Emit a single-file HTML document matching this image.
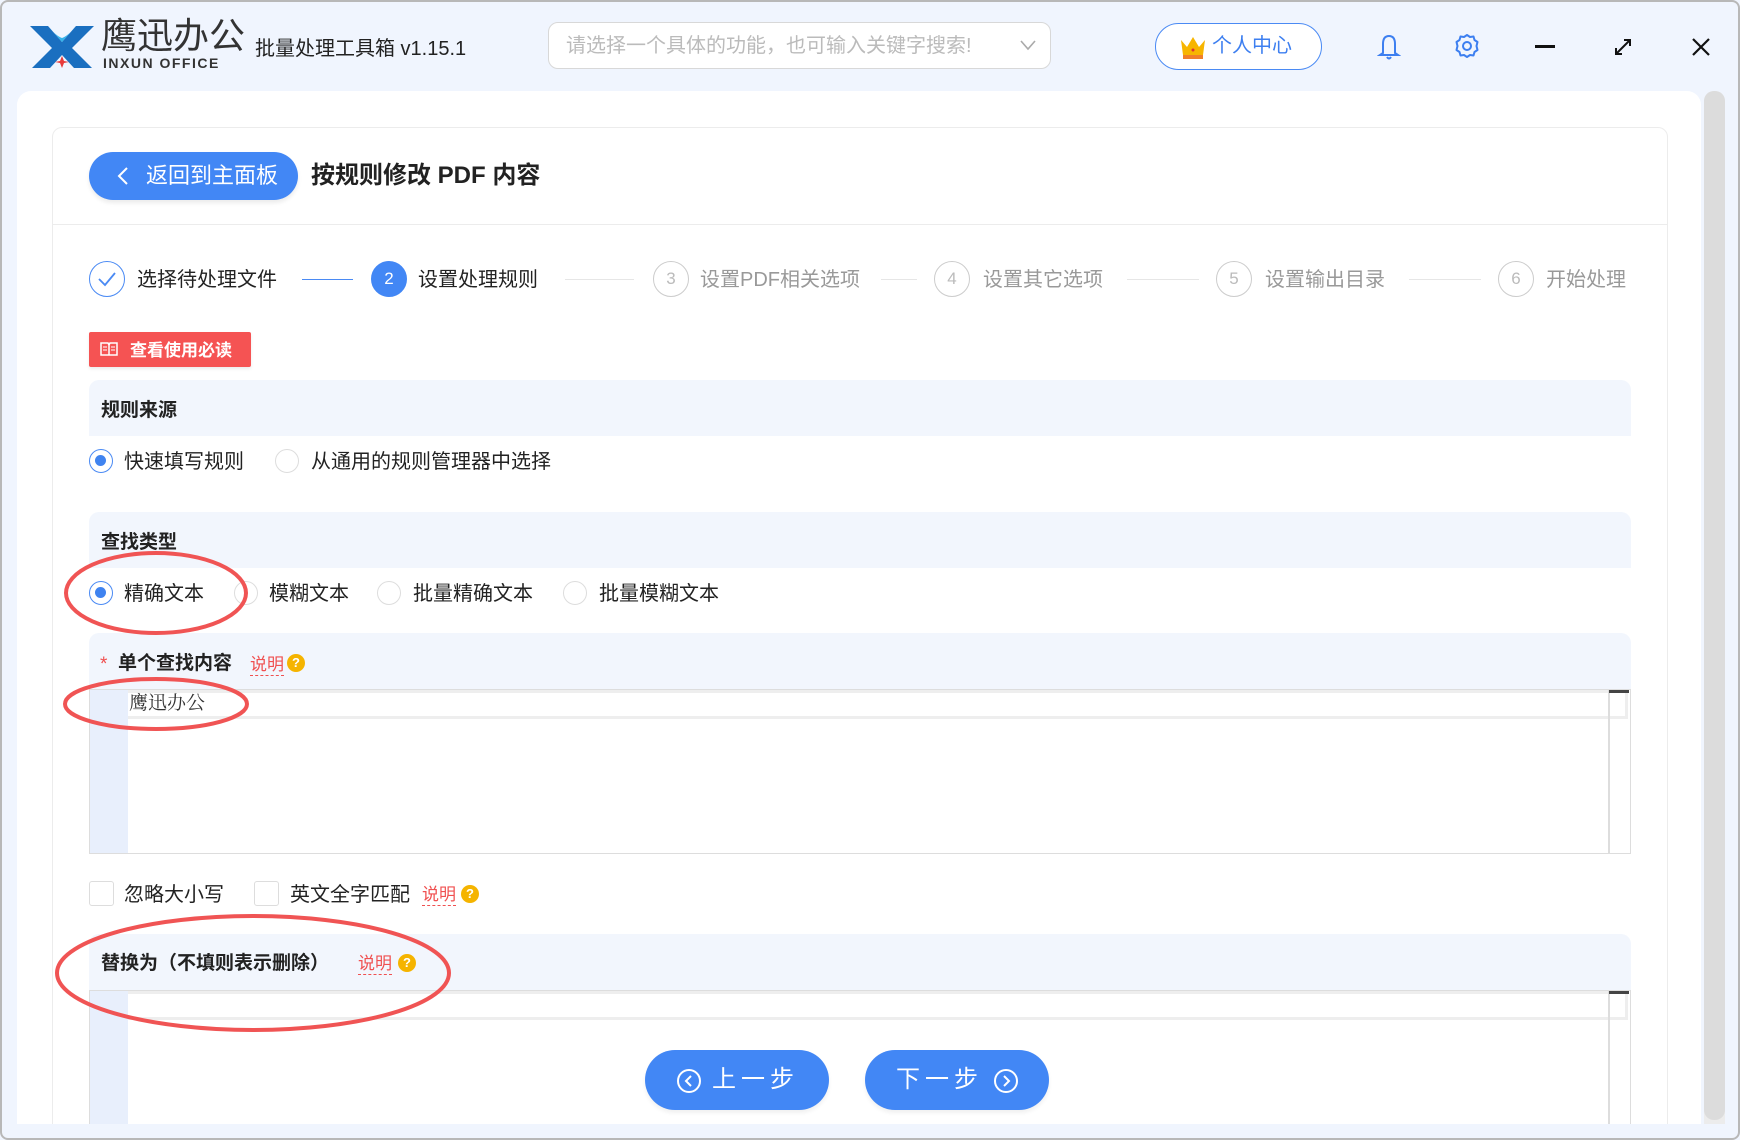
<!DOCTYPE html>
<html><head><meta charset="utf-8"><style>
*{margin:0;padding:0;box-sizing:border-box}
body{width:1740px;height:1140px;background:#f0f5fe;position:relative;overflow:hidden;font-family:"Liberation Sans","Noto Sans CJK SC",sans-serif;color:#222}
.a{position:absolute}
.t{position:absolute;white-space:nowrap;line-height:1}
.circ{position:absolute;width:36px;height:36px;border-radius:50%;border:1.5px solid #ccc;color:#bbb;font-size:17px;text-align:center;line-height:33px}
.stx{position:absolute;font-size:20px;color:#999;white-space:nowrap;line-height:1;top:270px}
.ln{position:absolute;height:1px;background:#e6e6e6;top:279px}
.sec{position:absolute;left:89px;width:1542px;background:#f2f6fd;border-radius:10px 10px 0 0}
.sh{position:absolute;font-size:19px;font-weight:bold;white-space:nowrap;line-height:1}
.radio{position:absolute;width:24px;height:24px;border-radius:50%;border:1.5px solid #ddd;background:#fff}
.radio.on{border-color:#4a8af4}
.radio.on::after{content:"";position:absolute;left:5px;top:5px;width:11px;height:11px;border-radius:50%;background:#3f83f0}
.rt{position:absolute;font-size:20px;white-space:nowrap;line-height:1}
.sm{position:absolute;font-size:17px;color:#f05050;white-space:nowrap;line-height:1;border-bottom:1.5px dashed #f05050;padding-bottom:2px}
.q{position:absolute;width:18px;height:18px;border-radius:50%;background:#f5b400;color:#fff;font-size:13px;text-align:center;line-height:18px;font-weight:bold}
.cb{position:absolute;width:25px;height:25px;border:1.5px solid #ddd;border-radius:3px;background:#fff}
#clip{position:absolute;left:0;top:0;width:1740px;height:1124px;overflow:hidden}
</style></head><body>
<div class="a" style="left:0;top:0;width:1740px;height:1140px;border:2px solid #b8b8b8;border-radius:8px;pointer-events:none;z-index:10"></div>

<svg class="a" style="left:28px;top:22px" width="68" height="48" viewBox="0 0 68 48">
<path d="M2 4 L20 4 L34 20 L48 4 L66 4 L44 26 L64 46 L46 46 L34 33 L22 46 L4 46 L24 26 Z" fill="#1a6fc0"/>
<path d="M20 4 L34 20 L48 4 Q40 14 34 16 Q28 14 20 4Z" fill="#35b3ea"/>
<path d="M34 34 L36 39 L41 40 L36 41 L34 46 L32 41 L27 40 L32 39Z" fill="#e83a3a"/>
</svg>
<div class="t" style="left:101px;top:18px;font-size:36px;color:#333;letter-spacing:0px">鹰迅办公</div>
<div class="t" style="left:103px;top:56px;font-size:14px;font-weight:bold;color:#333;letter-spacing:1.5px">INXUN OFFICE</div>
<div class="t" style="left:255px;top:39px;font-size:20px;color:#222">批量处理工具箱 v1.15.1</div>

<div class="a" style="left:548px;top:22px;width:503px;height:47px;border:1px solid #d8d8d8;border-radius:10px;background:#fff"></div>
<div class="t" style="left:566px;top:36px;font-size:20px;color:#bbb">请选择一个具体的功能，也可输入关键字搜索!</div>
<svg class="a" style="left:1019px;top:38px" width="18" height="14"><path d="M2 3 L9 11 L16 3" fill="none" stroke="#aaa" stroke-width="1.6"/></svg>

<div class="a" style="left:1155px;top:23px;width:167px;height:47px;border:1.5px solid #4a8af4;border-radius:24px;background:#fff"></div>
<svg class="a" style="left:1179px;top:34px" width="28" height="27" viewBox="0 0 28 27"><path d="M2 6 L8 13 L14 3 L20 13 L26 6 L24 21 L4 21Z" fill="#f7b500"/><rect x="4" y="21" width="20" height="4" fill="#f07f2a"/><circle cx="14" cy="16" r="1.5" fill="#d33"/></svg>
<div class="t" style="left:1212px;top:36px;font-size:20px;color:#3d7ff0">个人中心</div>

<svg class="a" style="left:1377px;top:33px" width="24" height="28" viewBox="0 0 24 28"><path d="M12 3 C7 3 6 7 6 11 L6 20 L3 22 L21 22 L18 20 L18 11 C18 7 17 3 12 3Z" fill="none" stroke="#3d7ff0" stroke-width="2"/><path d="M10 24 Q12 27 14 24" fill="none" stroke="#3d7ff0" stroke-width="2"/></svg>
<svg class="a" style="left:1454px;top:33px" width="26" height="26" viewBox="0 0 26 26"><path d="M13 2 L16 4 L19.5 3.5 L20.5 7 L23.5 9 L22.5 13 L23.5 17 L20.5 19 L19.5 22.5 L16 22 L13 24 L10 22 L6.5 22.5 L5.5 19 L2.5 17 L3.5 13 L2.5 9 L5.5 7 L6.5 3.5 L10 4Z" fill="none" stroke="#3d7ff0" stroke-width="2" stroke-linejoin="round"/><circle cx="13" cy="13" r="4" fill="none" stroke="#3d7ff0" stroke-width="2"/></svg>
<div class="a" style="left:1535px;top:45px;width:20px;height:2.5px;background:#111"></div>
<svg class="a" style="left:1612px;top:36px" width="22" height="22"><path d="M5 17 L17 5 M12 4 L18 4 L18 10 M4 12 L4 18 L10 18" fill="none" stroke="#111" stroke-width="2"/></svg>
<svg class="a" style="left:1690px;top:36px" width="22" height="22"><path d="M3 3 L19 19 M19 3 L3 19" stroke="#111" stroke-width="2.2"/></svg>

<div id="clip">
<div class="a" style="left:17px;top:91px;width:1684px;height:1040px;background:#fff;border-radius:14px 14px 0 0"></div>
<div class="a" style="left:1704px;top:91px;width:21px;height:1040px;background:#ececec;border-radius:10px 10px 0 0"></div>
<div class="a" style="left:1704px;top:91px;width:21px;height:1029px;background:#dcdcdc;border-radius:10px"></div>

<div class="a" style="left:52px;top:127px;width:1616px;height:1010px;border:1px solid #ececec;border-radius:10px"></div>
<div class="a" style="left:53px;top:224px;width:1614px;height:1px;background:#ececec"></div>

<div class="a" style="left:89px;top:152px;width:209px;height:48px;background:#4287f5;border-radius:24px;box-shadow:0 3px 4px rgba(0,0,0,.08)"></div>
<svg class="a" style="left:116px;top:166px" width="14" height="20"><path d="M11 2 L3 10 L11 18" fill="none" stroke="#fff" stroke-width="2"/></svg>
<div class="t" style="left:146px;top:165px;font-size:22px;color:#fff">返回到主面板</div>
<div class="t" style="left:311px;top:164px;font-size:24px;font-weight:bold;color:#222">按规则修改 PDF 内容</div>

<div class="circ" style="left:89px;top:261px;border-color:#4a8af4"></div>
<svg class="a" style="left:97px;top:270px" width="20" height="18"><path d="M2 9 L8 15 L18 3" fill="none" stroke="#4a8af4" stroke-width="1.8"/></svg>
<div class="stx" style="left:137px;color:#222">选择待处理文件</div>
<div class="ln" style="left:302px;width:51px;background:#4a8af4"></div>
<div class="circ" style="left:371px;top:261px;background:#4287f5;border-color:#4287f5;color:#fff">2</div>
<div class="stx" style="left:418px;color:#222">设置处理规则</div>
<div class="ln" style="left:565px;width:69px"></div>
<div class="circ" style="left:653px;top:261px">3</div>
<div class="stx" style="left:700px">设置PDF相关选项</div>
<div class="ln" style="left:881px;width:36px"></div>
<div class="circ" style="left:934px;top:261px">4</div>
<div class="stx" style="left:983px">设置其它选项</div>
<div class="ln" style="left:1127px;width:72px"></div>
<div class="circ" style="left:1216px;top:261px">5</div>
<div class="stx" style="left:1265px">设置输出目录</div>
<div class="ln" style="left:1409px;width:72px"></div>
<div class="circ" style="left:1498px;top:261px">6</div>
<div class="stx" style="left:1546px">开始处理</div>

<div class="a" style="left:89px;top:332px;width:162px;height:35px;background:#f55353;border-radius:2px;box-shadow:0 2px 3px rgba(0,0,0,.08)"></div>
<svg class="a" style="left:100px;top:341px" width="18" height="16"><path d="M1 2 L8 2 L9 4 L10 2 L17 2 L17 14 L1 14Z M9 4 L9 14" fill="none" stroke="#fff" stroke-width="1.5"/><path d="M3 6 H7 M3 9 H7 M11 6 H15 M11 9 H15" stroke="#fff" stroke-width="1"/></svg>
<div class="t" style="left:130px;top:342px;font-size:17px;font-weight:bold;color:#fff">查看使用必读</div>

<div class="sec" style="top:380px;height:56px"></div>
<div class="sh" style="left:101px;top:401px">规则来源</div>
<div class="radio on" style="left:89px;top:449px"></div>
<div class="rt" style="left:124px;top:452px">快速填写规则</div>
<div class="radio" style="left:275px;top:449px"></div>
<div class="rt" style="left:311px;top:452px">从通用的规则管理器中选择</div>

<div class="sec" style="top:512px;height:56px"></div>
<div class="sh" style="left:101px;top:533px">查找类型</div>
<div class="radio on" style="left:89px;top:581px"></div>
<div class="rt" style="left:124px;top:584px">精确文本</div>
<div class="radio" style="left:234px;top:581px"></div>
<div class="rt" style="left:269px;top:584px">模糊文本</div>
<div class="radio" style="left:377px;top:581px"></div>
<div class="rt" style="left:413px;top:584px">批量精确文本</div>
<div class="radio" style="left:563px;top:581px"></div>
<div class="rt" style="left:599px;top:584px">批量模糊文本</div>

<div class="sec" style="top:633px;height:56px"></div>
<div class="sh" style="left:100px;top:655px;color:#f05050;font-weight:normal">*</div>
<div class="sh" style="left:118px;top:654px">单个查找内容</div>
<div class="sm" style="left:250px;top:656px">说明</div>
<div class="q" style="left:287px;top:654px">?</div>
<div class="a" style="left:89px;top:689px;width:1542px;height:165px;border:1.5px solid #ddd;background:#fff"></div>
<div class="a" style="left:90px;top:690px;width:38px;height:163px;background:#e8effc"></div>
<div class="a" style="left:128px;top:690px;width:1500px;height:29px;border:3px solid #eee;border-left:none;background:#fff"></div>
<div class="a" style="left:1608px;top:690px;width:1.5px;height:163px;background:#ddd"></div>
<div class="a" style="left:1609px;top:690px;width:20px;height:3px;background:#444"></div>
<div class="t" style="left:129px;top:694px;font-size:19px;font-family:'Liberation Serif','Noto Serif CJK SC',serif;color:#333">鹰迅办公</div>

<div class="cb" style="left:89px;top:881px"></div>
<div class="rt" style="left:124px;top:885px">忽略大小写</div>
<div class="cb" style="left:254px;top:881px"></div>
<div class="rt" style="left:290px;top:885px">英文全字匹配</div>
<div class="sm" style="left:422px;top:886px">说明</div>
<div class="q" style="left:461px;top:885px">?</div>

<div class="sec" style="top:934px;height:56px"></div>
<div class="sh" style="left:101px;top:954px">替换为（不填则表示删除）</div>
<div class="sm" style="left:358px;top:955px">说明</div>
<div class="q" style="left:398px;top:954px">?</div>
<div class="a" style="left:89px;top:990px;width:1542px;height:160px;border:1.5px solid #ddd;background:#fff"></div>
<div class="a" style="left:90px;top:991px;width:38px;height:150px;background:#e8effc"></div>
<div class="a" style="left:128px;top:991px;width:1500px;height:29px;border:3px solid #eee;border-left:none;background:#fff"></div>
<div class="a" style="left:1608px;top:991px;width:1.5px;height:150px;background:#ddd"></div>
<div class="a" style="left:1609px;top:991px;width:20px;height:3px;background:#444"></div>

<div class="a" style="left:645px;top:1050px;width:184px;height:60px;background:#4287f5;border-radius:30px;box-shadow:0 3px 4px rgba(0,0,0,.06)"></div>
<svg class="a" style="left:676px;top:1068px" width="26" height="26"><circle cx="13" cy="13" r="11" fill="none" stroke="#fff" stroke-width="2"/><path d="M15 8 L10 13 L15 18" fill="none" stroke="#fff" stroke-width="2"/></svg>
<div class="t" style="left:712px;top:1068px;font-size:24px;color:#fff;letter-spacing:5px">上一步</div>
<div class="a" style="left:865px;top:1050px;width:184px;height:60px;background:#4287f5;border-radius:30px;box-shadow:0 3px 4px rgba(0,0,0,.06)"></div>
<div class="t" style="left:896px;top:1068px;font-size:24px;color:#fff;letter-spacing:5px">下一步</div>
<svg class="a" style="left:993px;top:1068px" width="26" height="26"><circle cx="13" cy="13" r="11" fill="none" stroke="#fff" stroke-width="2"/><path d="M11 8 L16 13 L11 18" fill="none" stroke="#fff" stroke-width="2"/></svg>
</div>

<svg class="a" style="left:0;top:0;z-index:5" width="1740" height="1140">
<ellipse cx="156" cy="593" rx="90" ry="40" fill="none" stroke="#f05454" stroke-width="4"/>
<ellipse cx="156" cy="704" rx="91" ry="25" fill="none" stroke="#f05454" stroke-width="4"/>
<ellipse cx="253" cy="973" rx="196" ry="57" fill="none" stroke="#f05454" stroke-width="4"/>
</svg>
</body></html>
